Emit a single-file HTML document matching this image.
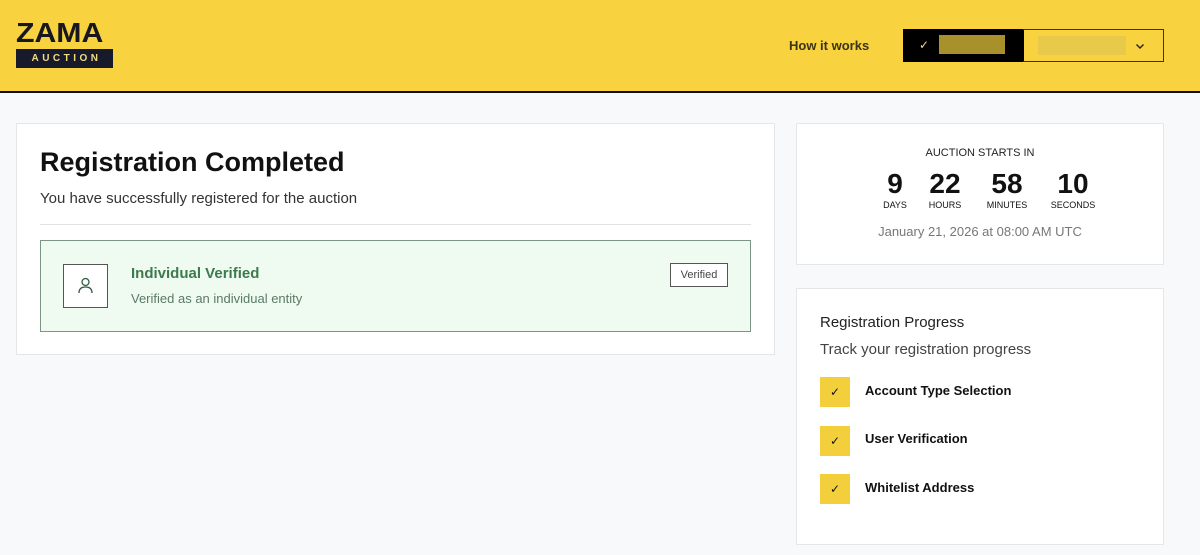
<!DOCTYPE html>
<html><head><meta charset="utf-8"><style>
*{box-sizing:border-box;margin:0;padding:0}
body{width:1200px;height:555px;background:#f8f9fb;font-family:"Liberation Sans",sans-serif;color:#111;position:relative;overflow:hidden}
.hdr{position:absolute;left:0;top:0;width:1200px;height:93px;background:#f8d33f;border-bottom:2px solid #111}
.abs{position:absolute}
.card{position:absolute;background:#fff;border:1px solid #e6e6e6}
</style></head><body>
<div class="hdr">
  <div class="abs" style="left:16px;top:22px;font-size:28px;font-weight:bold;line-height:22px;color:#17171f;transform:scaleX(1.08);transform-origin:left">ZAMA</div>
  <div class="abs" style="left:16px;top:49px;width:97px;height:19px;background:#171a2a;color:#f3dc80;font-size:10px;font-weight:bold;letter-spacing:3.5px;text-align:center;line-height:19px;padding-left:4px">AUCTION</div>
  <div class="abs" style="left:789px;top:38px;font-size:13px;font-weight:bold;color:#3a3418">How it works</div>
  <div class="abs" style="left:903px;top:29px;width:121px;height:33px;background:#000">
    <div class="abs" style="left:16px;top:9px;color:#f3dc80;font-size:12px">✓</div>
    <div class="abs" style="left:36px;top:6px;width:66px;height:19px;background:#a8902a"></div>
  </div>
  <div class="abs" style="left:1023px;top:29px;width:141px;height:33px;border:1px solid #3a3418;border-left:none">
    <div class="abs" style="left:15px;top:6px;width:88px;height:19px;background:#e8c94a"></div>
    <svg class="abs" style="left:112px;top:12px" width="10" height="8" viewBox="0 0 10 8"><path d="M1.5 2.5 L5 6 L8.5 2.5" fill="none" stroke="#222" stroke-width="1.4"/></svg>
  </div>
</div>
<div class="card" style="left:16px;top:123px;width:759px;height:232px">
  <div class="abs" style="left:23px;top:23px;font-size:27px;font-weight:bold;color:#111">Registration Completed</div>
  <div class="abs" style="left:23px;top:66px;font-size:15px;color:#333">You have successfully registered for the auction</div>
  <div class="abs" style="left:23px;top:100px;width:711px;height:1px;background:#e2e2e2"></div>
  <div class="abs" style="left:23px;top:116px;width:711px;height:92px;background:#effbf1;border:1.5px solid #7c9484">
    <div class="abs" style="left:22px;top:23px;width:45px;height:44px;border:1px solid #555;background:#fff">
      <svg width="45" height="44" viewBox="0 0 45 44" style="position:absolute;left:-1px;top:-1px"><circle cx="22.5" cy="18" r="3.5" fill="none" stroke="#2f5a3f" stroke-width="1.3"/><path d="M16 29 Q16 23 22.5 23 Q29 23 29 29" fill="none" stroke="#2f5a3f" stroke-width="1.3"/></svg>
    </div>
    <div class="abs" style="left:90px;top:24px;font-size:15px;font-weight:bold;color:#3d7a4c">Individual Verified</div>
    <div class="abs" style="left:90px;top:50px;font-size:13px;color:#5c7a66">Verified as an individual entity</div>
    <div class="abs" style="left:629px;top:22px;width:58px;height:24px;border:1px solid #555;background:#fff;font-size:11px;color:#444;text-align:center;line-height:22px">Verified</div>
  </div>
</div>
<div class="card" style="left:796px;top:123px;width:368px;height:142px;text-align:center">
  <div class="abs" style="left:0;width:100%;top:23px;font-size:11px;color:#222">AUCTION STARTS IN</div>
  <div class="abs" style="left:76px;top:44px;display:flex;gap:0">
    <div style="width:44px"><div style="font-size:28px;font-weight:bold">9</div><div style="font-size:9px">DAYS</div></div>
    <div style="width:56px"><div style="font-size:28px;font-weight:bold">22</div><div style="font-size:9px">HOURS</div></div>
    <div style="width:68px"><div style="font-size:28px;font-weight:bold">58</div><div style="font-size:9px">MINUTES</div></div>
    <div style="width:64px"><div style="font-size:28px;font-weight:bold">10</div><div style="font-size:9px">SECONDS</div></div>
  </div>
  <div class="abs" style="left:0;width:100%;top:100px;font-size:13px;color:#777">January 21, 2026 at 08:00 AM UTC</div>
</div>
<div class="card" style="left:796px;top:288px;width:368px;height:257px">
  <div class="abs" style="left:23px;top:25px;font-size:15px;color:#222">Registration Progress</div>
  <div class="abs" style="left:23px;top:52px;font-size:15px;color:#444">Track your registration progress</div>
  <div class="abs" style="left:23px;top:88px;width:30px;height:30px;background:#f3cf3c;text-align:center;line-height:30px;font-size:12px">✓</div>
  <div class="abs" style="left:68px;top:94px;font-size:13px;font-weight:bold">Account Type Selection</div>
  <div class="abs" style="left:23px;top:137px;width:30px;height:30px;background:#f3cf3c;text-align:center;line-height:30px;font-size:12px">✓</div>
  <div class="abs" style="left:68px;top:142px;font-size:13px;font-weight:bold">User Verification</div>
  <div class="abs" style="left:23px;top:185px;width:30px;height:30px;background:#f3cf3c;text-align:center;line-height:30px;font-size:12px">✓</div>
  <div class="abs" style="left:68px;top:191px;font-size:13px;font-weight:bold">Whitelist Address</div>
</div>
</body></html>
